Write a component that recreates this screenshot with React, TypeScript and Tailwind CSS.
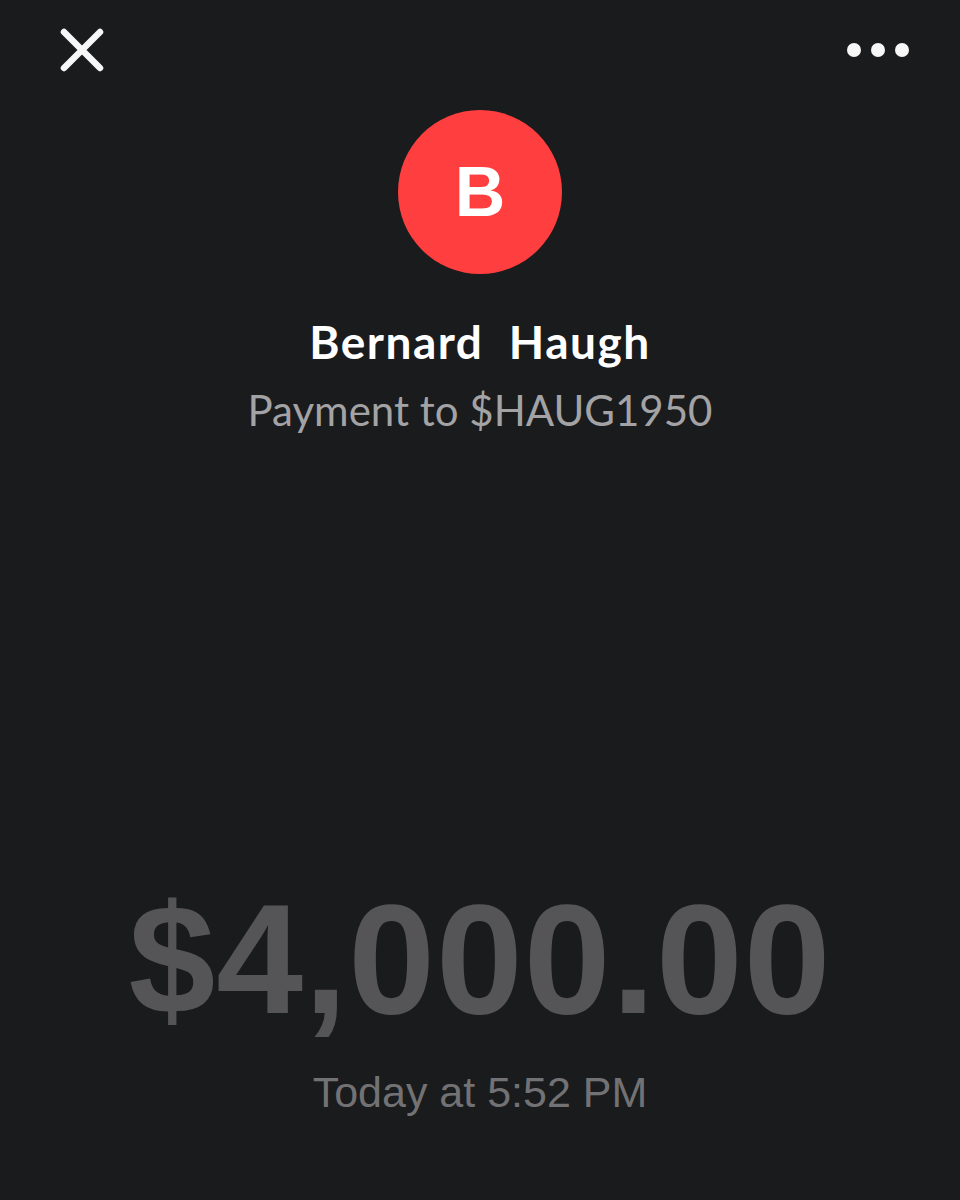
import React from 'react';

const CloseIcon: React.FC = () => (
  <svg width="44" height="44" viewBox="0 0 44 44" fill="none">
    <path d="M4 4L40 40M40 4L4 40" stroke="#f7f7f7" strokeWidth="6.5" strokeLinecap="round" />
  </svg>
);

const App: React.FC = () => {
  return (
    <div className="h-[1200px] w-[960px] bg-[#1a1b1d] flex flex-col items-center font-['Lato',sans-serif]">
      {/* Top bar */}
      <div className="w-full flex items-center justify-between pl-[60px] pr-[51px] pt-[28px]">
        <CloseIcon />
        <div className="flex items-center gap-[10px]">
          <span className="w-[14px] h-[14px] rounded-full bg-[#f7f7f7]" />
          <span className="w-[14px] h-[14px] rounded-full bg-[#f7f7f7]" />
          <span className="w-[14px] h-[14px] rounded-full bg-[#f7f7f7]" />
        </div>
      </div>

      {/* Avatar */}
      <div className="mt-[38px] w-[164px] h-[164px] rounded-full bg-[#ff3f3f] flex items-center justify-center">
        <span className="text-white text-[70px] font-bold leading-none font-['Liberation_Sans',sans-serif]">B</span>
      </div>

      <h1 className="mt-[45px] text-white text-[46px] font-bold leading-none tracking-[1.5px] whitespace-pre">Bernard  Haugh</h1>
      <p className="mt-[24px] text-[#a3a3a5] text-[42px] leading-none">Payment to $HAUG1950</p>

      <div className="flex-1" />

      <div className="text-[#555557] text-[156px] font-bold leading-none tracking-[1px] font-['Liberation_Sans',sans-serif]">
        $4,000.00
      </div>
      <p className="mt-[34px] mb-[86px] text-[#727274] text-[43px] leading-none font-['Liberation_Sans',sans-serif]">
        Today at 5:52 PM
      </p>
    </div>
  );
};

export default App;
